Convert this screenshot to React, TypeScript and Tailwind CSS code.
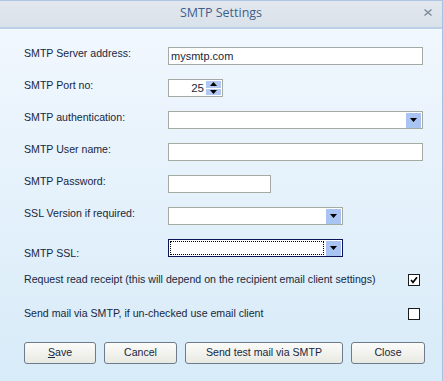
import React from "react";

const labelCls = "w-[144px] shrink-0 text-[10.6px] leading-[13px] text-[#17273d]";

function DropBtn() {
  return (
    <div className="w-[15px] h-[15px] bg-[#a9c3f3] flex items-center justify-center">
      <svg width="7" height="4" viewBox="0 0 7 4"><path d="M0 0H7L3.5 4Z" fill="#000" /></svg>
    </div>
  );
}

function TextBox({ w, value }: { w: string; value?: string }) {
  return (
    <div className={`${w} h-[18px] border border-[#a6aaa4] bg-white flex items-center px-[2px] text-[11px] text-[#17273d]`}>
      {value}
    </div>
  );
}

function Combo({ w, focused }: { w: string; focused?: boolean }) {
  return (
    <div
      className={`${w} h-[18px] border ${focused ? "border-[#0a1656]" : "border-[#a6aaa4]"} bg-white flex items-center justify-end pr-[1px] gap-[2px] pl-[1px]`}
    >
      {focused && <div className="flex-1 h-[14px] border border-dotted border-black" />}
      <DropBtn />
    </div>
  );
}

function Check({ checked }: { checked?: boolean }) {
  return (
    <div className="w-[12px] h-[12px] border border-[#1c1c1c] bg-white flex items-center justify-center">
      {checked && (
        <svg width="8" height="8" viewBox="0 0 8 8">
          <path d="M1 4L3 6.3L7 1.3" stroke="#000" strokeWidth="1.7" fill="none" />
        </svg>
      )}
    </div>
  );
}

function Btn({ w, children }: { w: string; children: React.ReactNode }) {
  return (
    <div
      className={`${w} h-[22px] rounded-[3px] border border-[#6f7b88] bg-gradient-to-b from-[#fbfbf9] to-[#e9e9e3] flex items-center justify-center text-[10.6px] text-[#17273d]`}
    >
      {children}
    </div>
  );
}

export default function App() {
  return (
    <div
      className="w-[443px] h-[381px] flex flex-col border-r border-[#a9c0df] overflow-hidden"
      style={{ fontFamily: '"Liberation Sans", Arial, sans-serif' }}
    >
      <div className="h-[29px] shrink-0 border-t border-[#afc6e3] border-b-2 border-b-[#bcd0ea] bg-gradient-to-b from-[#e3e8ee] to-[#d9e1ea] relative flex items-center justify-center">
        <span
          className="text-[12.5px] text-[#3f5f8c] pb-[1px]"
          style={{ fontFamily: '"Open Sans", "Noto Sans", sans-serif' }}
        >
          SMTP Settings
        </span>
        <svg className="absolute right-[10px] top-[8px]" width="8" height="7" viewBox="0 0 8 7">
          <path d="M0.5 0.5L7.5 6.5M7.5 0.5L0.5 6.5" stroke="#7b8695" strokeWidth="1.3" />
        </svg>
      </div>
      <div className="flex-1 bg-gradient-to-b from-[#f1f7fe] to-[#d7ebf8] border-t border-[#f6f9fd] pl-[24px] pt-[17px] flex flex-col">
        <div className="flex flex-col gap-[14px]">
          <div className="flex items-start">
            <div className={labelCls}>SMTP Server address:</div>
            <TextBox w="w-[255px]" value="mysmtp.com" />
          </div>
          <div className="flex items-start">
            <div className={labelCls}>SMTP Port no:</div>
            <div className="w-[55px] h-[18px] border border-[#a6aaa4] bg-white flex items-stretch">
              <div className="flex-1 text-right pr-[2px] text-[11.5px] leading-[16px] text-[#17273d]">25</div>
              <div className="w-[16px] flex flex-col gap-[1px] py-[1px] pr-[1px]">
                <div className="flex-1 bg-[#b1c8f2] flex items-center justify-center">
                  <svg width="7" height="4" viewBox="0 0 7 4"><path d="M0 4H7L3.5 0Z" fill="#000" /></svg>
                </div>
                <div className="flex-1 bg-[#b1c8f2] flex items-center justify-center">
                  <svg width="7" height="4" viewBox="0 0 7 4"><path d="M0 0H7L3.5 4Z" fill="#000" /></svg>
                </div>
              </div>
            </div>
          </div>
          <div className="flex items-start">
            <div className={labelCls}>SMTP authentication:</div>
            <Combo w="w-[255px]" />
          </div>
          <div className="flex items-start">
            <div className={labelCls}>SMTP User name:</div>
            <TextBox w="w-[255px]" />
          </div>
          <div className="flex items-start">
            <div className={labelCls}>SMTP Password:</div>
            <TextBox w="w-[103px]" />
          </div>
          <div className="flex items-start">
            <div className={labelCls}>SSL Version if required:</div>
            <Combo w="w-[175px]" />
          </div>
          <div className="flex items-start">
            <div className={`${labelCls} mt-[8px]`}>SMTP SSL:</div>
            <Combo w="w-[175px]" focused />
          </div>
        </div>
        <div className="w-[396px] mt-[14px] flex items-center justify-between h-[12px]">
          <span className="text-[10.6px] text-[#17273d]">
            Request read receipt (this will depend on the recipient email client settings)
          </span>
          <Check checked />
        </div>
        <div className="w-[396px] mt-[22px] flex items-center justify-between h-[12px]">
          <span className="text-[10.6px] text-[#17273d]">Send mail via SMTP, if un-checked use email client</span>
          <Check />
        </div>
        <div className="mt-[22px] flex gap-[8px]">
          <Btn w="w-[72px]">
            <span>
              <span className="underline">S</span>ave
            </span>
          </Btn>
          <Btn w="w-[73px]">Cancel</Btn>
          <Btn w="w-[158px]">Send test mail via SMTP</Btn>
          <Btn w="w-[74px]">Close</Btn>
        </div>
      </div>
    </div>
  );
}
